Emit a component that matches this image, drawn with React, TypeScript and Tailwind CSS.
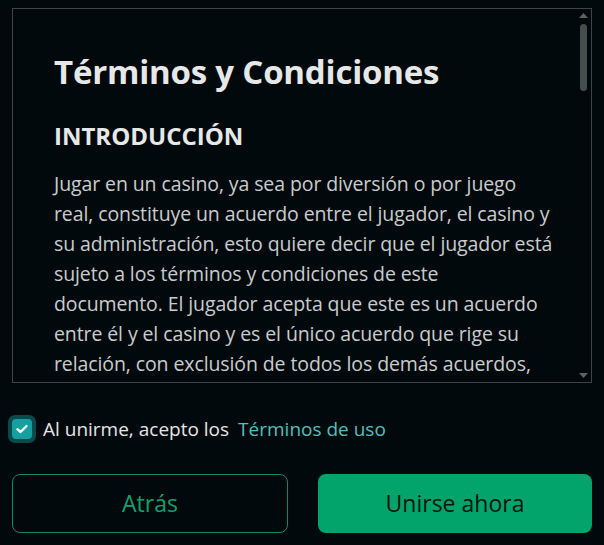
import React from "react";

const lines = [
  "Jugar en un casino, ya sea por diversión o por juego",
  "real, constituye un acuerdo entre el jugador, el casino y",
  "su administración, esto quiere decir que el jugador está",
  "sujeto a los términos y condiciones de este",
  "documento. El jugador acepta que este es un acuerdo",
  "entre él y el casino y es el único acuerdo que rige su",
  "relación, con exclusión de todos los demás acuerdos,",
  "declaraciones o garantías, ya sean orales o escritas.",
  "Al registrarse, el jugador confirma que ha leído,",
  "entendido y aceptado estos términos.",
];

export default function App() {
  return (
    <div className="w-[604px] h-[545px] bg-[#02090c] overflow-hidden" style={{ fontFamily: "'Open Sans', 'Noto Sans', sans-serif" }}>
      <div className="flex flex-col pt-[8px] px-[12px]">
        <div className="relative h-[375px] border border-[#3c4648]">
          <div className="h-full overflow-hidden pl-[41px] pr-[16px]">
            <h1 className="mt-[43px] text-[33px] font-bold text-[#e6e8e8] leading-[40px] tracking-[-0.2px]">Términos y Condiciones</h1>
            <h2 className="mt-[29px] text-[24px] font-bold text-[#e6e8e8] leading-[30px]">INTRODUCCIÓN</h2>
            <p className="mt-[18px] text-[19.5px] leading-[30px] text-[#c9cccc] tracking-[-0.1px]">
              {lines.map((l, i) => (
                <span key={i} className="block whitespace-nowrap">{l}</span>
              ))}
            </p>
          </div>
          <div className="absolute right-[3px] top-[4px] bottom-[4px] w-[9px] flex flex-col items-center">
            <svg width="9" height="5" viewBox="0 0 9 5"><path d="M0 5 L4.5 0 L9 5 Z" fill="#5b6262" /></svg>
            <div className="mt-[6px] w-[7px] h-[67px] rounded-full bg-[#454d4d]" />
            <div className="flex-1" />
            <svg width="9" height="5" viewBox="0 0 9 5"><path d="M0 0 L9 0 L4.5 5 Z" fill="#5b6262" /></svg>
          </div>
        </div>
        <div className="mt-[32px] flex items-center">
          <div className="w-[28px] h-[28px] -ml-[4px] rounded-[7px] bg-[#0a4a4b] flex items-center justify-center">
            <div className="w-[20px] h-[20px] rounded-[4px] bg-[#14a0a0] flex items-center justify-center">
              <svg width="12" height="10" viewBox="0 0 12 10" fill="none">
                <path d="M1.5 5.2 L4.5 8 L10.5 2" stroke="white" strokeWidth="2.4" strokeLinecap="round" strokeLinejoin="round" />
              </svg>
            </div>
          </div>
          <span className="ml-[7px] text-[19px] text-[#e3e6e6]">Al unirme, acepto los</span>
          <span className="ml-[9px] text-[19px] text-[#4fc0bb]">Términos de uso</span>
        </div>
        <div className="mt-[30px] flex gap-[30px]">
          <button className="flex-1 h-[59px] rounded-[8px] border border-[#13885f] text-[#12a06c] text-[23px]">Atrás</button>
          <button className="flex-1 h-[59px] rounded-[8px] bg-[#03a36c] text-[#06150f] text-[23px]">Unirse ahora</button>
        </div>
      </div>
    </div>
  );
}
